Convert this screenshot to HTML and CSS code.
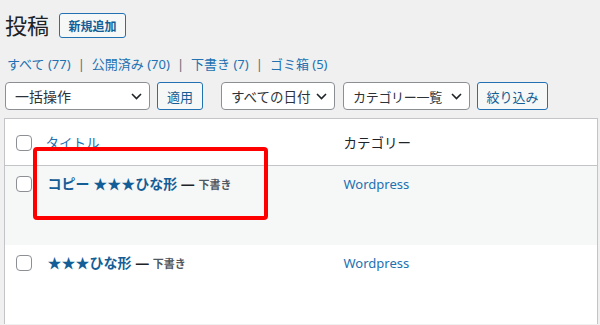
FILE: index.html
```html
<!DOCTYPE html>
<html lang="ja">
<head>
  <meta charset="UTF-8" />
  <title>投稿</title>
  <link rel="stylesheet" href="styles.css">
</head>
<body>
  <div class="wrap">
    <div class="page-head">
      <h1>投稿</h1>
      <a class="add-new">新規追加</a>
    </div>

    <ul class="subsubsub">
      <li><a>すべて <span class="count">(77)</span></a><span class="sep">|</span></li>
      <li><a>公開済み <span class="count">(70)</span></a><span class="sep">|</span></li>
      <li><a>下書き <span class="count">(7)</span></a><span class="sep">|</span></li>
      <li><a>ゴミ箱 <span class="count">(5)</span></a></li>
    </ul>

    <div class="tablenav">
      <div class="select bulk">一括操作
        <svg class="chev" width="11" height="7" viewBox="0 0 11 7"><path d="M1 1l4.5 4.5L10 1" fill="none" stroke="#1d2327" stroke-width="1.6"/></svg>
      </div>
      <button class="btn apply">適用</button>
      <div class="select dates">すべての日付
        <svg class="chev" width="11" height="7" viewBox="0 0 11 7"><path d="M1 1l4.5 4.5L10 1" fill="none" stroke="#1d2327" stroke-width="1.6"/></svg>
      </div>
      <div class="select cats">カテゴリー一覧
        <svg class="chev" width="11" height="7" viewBox="0 0 11 7"><path d="M1 1l4.5 4.5L10 1" fill="none" stroke="#1d2327" stroke-width="1.6"/></svg>
      </div>
      <button class="btn filter">絞り込み</button>
    </div>

    <div class="list-wrap">
      <table class="posts">
        <thead>
          <tr>
            <th class="cb"><span class="checkbox"></span></th>
            <th class="title"><a>タイトル</a></th>
            <th class="cat">カテゴリー</th>
          </tr>
        </thead>
        <tbody>
          <tr class="alt">
            <td class="cb"><span class="checkbox"></span></td>
            <td class="title"><strong><a class="row-title">コピー ★★★ひな形</a> — <span class="state">下書き</span></strong></td>
            <td class="cat"><a>Wordpress</a></td>
          </tr>
          <tr>
            <td class="cb"><span class="checkbox"></span></td>
            <td class="title"><strong><a class="row-title">★★★ひな形</a> — <span class="state">下書き</span></strong></td>
            <td class="cat"><a>Wordpress</a></td>
          </tr>
        </tbody>
      </table>
      <div class="highlight"></div>
    </div>
  </div>
</body>
</html>
```

FILE: styles.css
```css
* {
  margin: 0;
  padding: 0;
  box-sizing: border-box;
}

body {
  background: #f0f0f1;
  color: #1d2327;
  font-family: "Noto Sans", "Noto Sans CJK JP", sans-serif;
  font-size: 13px;
  overflow: hidden;
}

a {
  color: #2271b1;
  text-decoration: none;
}

.wrap {
  padding: 10px 0 0 4px;
}

.page-head {
  display: flex;
  align-items: center;
  gap: 10px;
  height: 30px;
  padding-left: 1px;
}

.page-head h1 {
  font-size: 22px;
  font-weight: 400;
  line-height: 30px;
}

.add-new {
  display: flex;
  align-items: center;
  justify-content: center;
  width: 67px;
  height: 25px;
  border: 1px solid #2271b1;
  border-radius: 3px;
  background: #f6f7f7;
  color: #135e96;
  font-size: 12px;
  font-weight: 700;
  margin-top: 1px;
}

.subsubsub {
  list-style: none;
  display: flex;
  margin-top: 15px;
  padding-left: 3px;
  line-height: 18px;
  font-size: 13px;
}

.subsubsub .sep {
  color: #646970;
  margin: 0 7px;
}

.tablenav {
  display: flex;
  align-items: center;
  margin-top: 9px;
  padding-left: 1px;
  height: 28px;
}

.select {
  display: flex;
  align-items: center;
  justify-content: space-between;
  height: 28px;
  padding: 0 7px 0 9px;
  background: #fff;
  border: 1px solid #8c8f94;
  border-radius: 4px;
  font-size: 14px;
  color: #2c3338;
  white-space: nowrap;
}

.bulk {
  width: 145px;
}

.dates {
  width: 114px;
  margin-left: 18px;
  font-size: 13.5px;
}

.cats {
  width: 127px;
  margin-left: 8px;
  font-size: 13px;
  letter-spacing: -0.3px;
}

.btn {
  height: 28px;
  border: 1px solid #2271b1;
  border-radius: 3px;
  background: #f6f7f7;
  color: #135e96;
  font-family: inherit;
  font-size: 13px;
}

.apply {
  width: 46px;
  margin-left: 7px;
}

.filter {
  width: 71px;
  margin-left: 7px;
}

.list-wrap {
  position: relative;
  margin-top: 8px;
}

.posts {
  width: 594px;
  border-collapse: collapse;
  background: #fff;
  border: 1px solid #c3c4c7;
  border-bottom: none;
  table-layout: fixed;
}

.posts th,
.posts td {
  text-align: left;
  font-weight: 400;
  vertical-align: top;
  line-height: 20px;
}

.posts thead th {
  height: 47px;
  border-bottom: 1px solid #c3c4c7;
  padding-top: 14px;
  font-size: 13.5px;
}

.posts tbody td {
  height: 79px;
  padding-top: 8px;
}

.posts tr.alt {
  background: #f6f7f7;
}

.cb {
  width: 41px;
  padding-left: 11px;
}

.posts th.title {
  width: 298px;
  padding-left: 0;
}

.posts td.title {
  padding-left: 2px;
  font-size: 14px;
  color: #1d2327;
}

.cat {
  padding-left: 0;
}

.checkbox {
  display: block;
  width: 16px;
  height: 16px;
  margin-top: 2px;
  border: 1px solid #8c8f94;
  border-radius: 4px;
  background: #fff;
}

.row-title {
  font-size: 14px;
  font-weight: 700;
  color: #135e96;
}

.state {
  font-size: 11px;
  font-weight: 700;
  color: #50575e;
}

.highlight {
  position: absolute;
  left: 29px;
  top: 29px;
  width: 235px;
  height: 73px;
  border: 4px solid #fe0000;
  border-radius: 4px;
}
```
